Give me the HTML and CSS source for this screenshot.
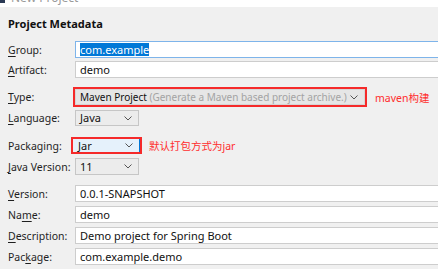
FILE: index.html
```html
<!DOCTYPE html>
<html lang="en">
<head>
	<meta charset="UTF-8">
	<title>New Project</title>
	<link rel="stylesheet" href="styles.css">
</head>
<body>
	<div class="titlebar">
		<span class="app-icon"></span>
		<span class="title">New Project</span>
	</div>
	<div class="panel">
		<h1 class="section-title">Project Metadata</h1>

		<div class="row row-group">
			<label class="label"><u>G</u>roup:</label>
			<div class="input focused"><span class="selected-text">com.example</span></div>
		</div>
		<div class="row row-artifact">
			<label class="label"><u>A</u>rtifact:</label>
			<div class="input">demo</div>
		</div>

		<div class="row row-type">
			<label class="label"><u>T</u>ype:</label>
			<div class="mark">
				<div class="combo combo-wide">
					<span class="combo-text">Maven Project <span class="hint">(Generate a Maven based project archive.)</span></span>
					<svg class="chevron" width="8" height="5" viewBox="0 0 8 5"><polyline points="0.5,0.5 4,4 7.5,0.5" /></svg>
				</div>
			</div>
			<span class="note">maven构建</span>
		</div>
		<div class="row row-language">
			<label class="label"><u>L</u>anguage:</label>
			<div class="combo">
				<span class="combo-text">Java</span>
				<svg class="chevron" width="8" height="5" viewBox="0 0 8 5"><polyline points="0.5,0.5 4,4 7.5,0.5" /></svg>
			</div>
		</div>

		<div class="row row-packaging">
			<label class="label">Packaging:</label>
			<div class="mark mark-tight">
				<div class="combo combo-active">
					<span class="combo-text">Jar</span>
					<svg class="chevron" width="8" height="5" viewBox="0 0 8 5"><polyline points="0.5,0.5 4,4 7.5,0.5" /></svg>
				</div>
			</div>
			<span class="note">默认打包方式为jar</span>
		</div>
		<div class="row row-java">
			<label class="label"><u>J</u>ava Version:</label>
			<div class="combo">
				<span class="combo-text">11</span>
				<svg class="chevron" width="8" height="5" viewBox="0 0 8 5"><polyline points="0.5,0.5 4,4 7.5,0.5" /></svg>
			</div>
		</div>

		<div class="row row-version">
			<label class="label"><u>V</u>ersion:</label>
			<div class="input">0.0.1-SNAPSHOT</div>
		</div>
		<div class="row">
			<label class="label">Na<u>m</u>e:</label>
			<div class="input">demo</div>
		</div>
		<div class="row">
			<label class="label"><u>D</u>escription:</label>
			<div class="input">Demo project for Spring Boot</div>
		</div>
		<div class="row">
			<label class="label">Pac<u>k</u>age:</label>
			<div class="input">com.example.demo</div>
		</div>
	</div>
</body>
</html>
```

FILE: styles.css
```css
*{
	margin: 0;
	padding: 0;
	box-sizing: border-box;
}
body{
	background: #f0f0f0;
	font-family: "Noto Sans", "Noto Sans CJK SC", sans-serif;
	font-size: 11px;
	color: #1a1a1a;
	overflow: hidden;
}

/* 标题栏,只露出底部 */
.titlebar{
	height: 7px;
	background: #fff;
	display: flex;
	align-items: flex-end;
	overflow: hidden;
}
.app-icon{
	width: 5px;
	height: 3px;
	background: #2b3a55;
	align-self: flex-start;
	flex-shrink: 0;
}
.title{
	font-size: 12px;
	line-height: 12px;
	color: #9a9a9a;
	margin-left: 6px;
	margin-bottom: 3px;
}

.panel{
	padding: 9px 0 0 8px;
}
.section-title{
	font-size: 11px;
	font-weight: bold;
	line-height: 16px;
	height: 16px;
	margin-bottom: 9px;
	color: #111;
}

.row{
	display: flex;
	align-items: center;
	height: 17px;
	margin-bottom: 4px;
}
.label{
	width: 67px;
	flex-shrink: 0;
	font-size: 10.5px;
	color: #1f1f1f;
}
.label u{
	text-decoration-thickness: 1px;
	text-underline-offset: 2px;
}

.input{
	width: 420px;
	flex-shrink: 0;
	height: 17px;
	line-height: 15px;
	border: 1px solid #cdcdcd;
	background: #fff;
	padding-left: 4px;
	white-space: nowrap;
	color: #111;
}
.input.focused{
	border-color: #7eb4ea;
}
.selected-text{
	background: #0078d7;
	color: #fff;
	display: inline-block;
	line-height: 13px;
}

.combo{
	width: 64px;
	height: 16px;
	border: 1px solid #c6c6c6;
	background: #ececec;
	display: flex;
	align-items: center;
	justify-content: space-between;
	padding: 0 6px 0 4px;
	white-space: nowrap;
	flex-shrink: 0;
}
.combo-wide{
	width: 290px;
	border-color: #d6d6d6;
	background: #e6e6e6;
	font-size: 10px;
}
.combo-active{
	width: 66px;
	height: 13px;
	margin-left: 1px;
	border: none;
	border-right: 1px solid #0078d7;
	background: #e5f1fb;
	padding-left: 4px;
}
.combo-text{
	line-height: 14px;
	color: #111;
}
.hint{
	color: #a3a3a3;
}
.chevron{
	fill: none;
	stroke: #555;
	stroke-width: 1;
	flex-shrink: 0;
}

/* 红框标注 */
.mark{
	border: 2px solid #f52a2a;
	margin-left: -2px;
	flex-shrink: 0;
}
.mark-tight{
	width: 71px;
	margin-left: -4px;
}
.note{
	color: #ff2d2d;
	font-size: 10.5px;
	margin-left: 8px;
	white-space: nowrap;
}

.row-group{
	margin-bottom: 3px;
}
.row-artifact{
	margin-bottom: 9px;
}
.row-type{
	height: 20px;
	margin-bottom: 3px;
}
.row-language{
	height: 16px;
	margin-bottom: 11px;
}
.row-packaging{
	height: 17px;
	margin-bottom: 4px;
}
.row-java{
	height: 17px;
	margin-bottom: 10px;
}
.row-java .combo{
	height: 17px;
}
.row-packaging .note{
	margin-left: 7px;
}
```
